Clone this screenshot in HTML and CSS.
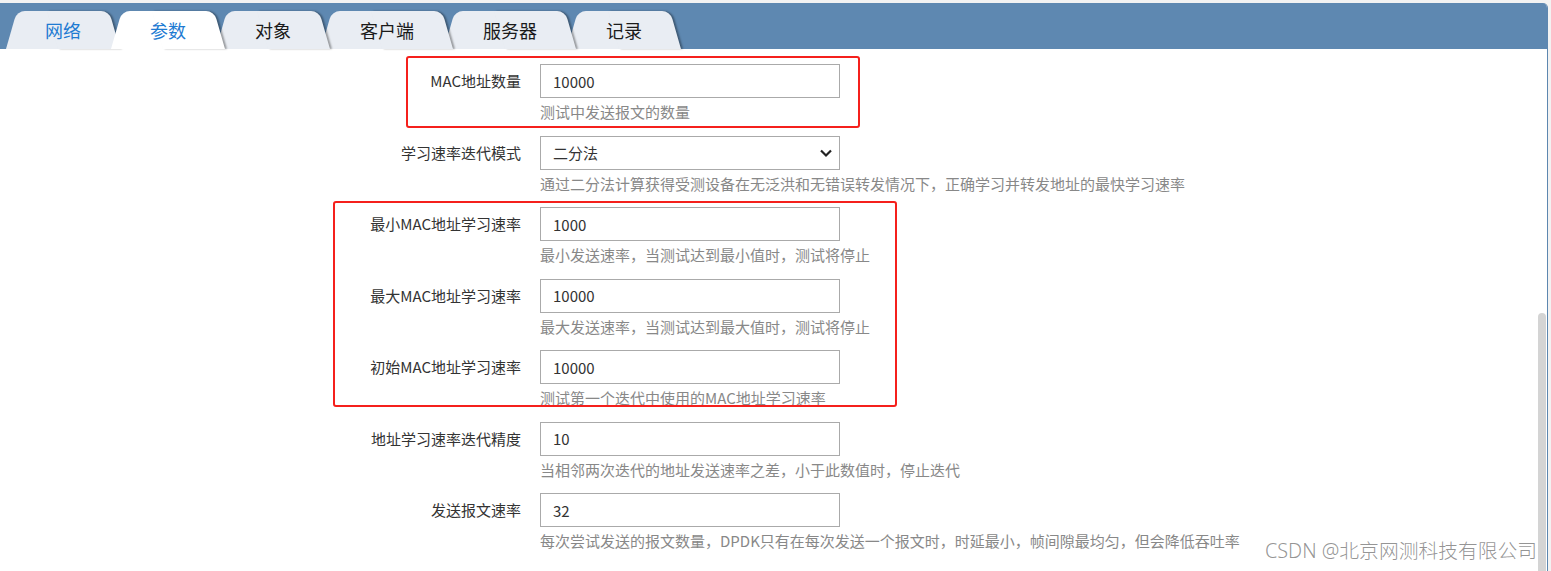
FILE: index.html
```html
<!DOCTYPE html>
<html lang="zh-CN">
<head>
  <meta charset="UTF-8">
  <title>测试参数</title>
  <link rel="stylesheet" href="styles.css">
</head>
<body>

<div class="panel">
  <div class="tabbar">
    <div class="tab visited">网络</div>
    <div class="tab active">参数</div>
    <div class="tab">对象</div>
    <div class="tab">客户端</div>
    <div class="tab">服务器</div>
    <div class="tab">记录</div>
  </div>

  <div class="content">
    <div class="row">
      <label class="label">MAC地址数量</label>
      <div class="field">
        <input class="input" type="text" value="10000">
        <div class="help">测试中发送报文的数量</div>
      </div>
    </div>

    <div class="row">
      <label class="label">学习速率迭代模式</label>
      <div class="field">
        <div class="select-wrap">
          <select class="input select">
            <option>二分法</option>
          </select>
          <svg class="chevron" width="14" height="10" viewBox="0 0 14 10">
            <path d="M2 2.5 L7 7.5 L12 2.5" fill="none" stroke="#222" stroke-width="2.2"/>
          </svg>
        </div>
        <div class="help">通过二分法计算获得受测设备在无泛洪和无错误转发情况下，正确学习并转发地址的最快学习速率</div>
      </div>
    </div>

    <div class="row">
      <label class="label">最小MAC地址学习速率</label>
      <div class="field">
        <input class="input" type="text" value="1000">
        <div class="help">最小发送速率，当测试达到最小值时，测试将停止</div>
      </div>
    </div>

    <div class="row">
      <label class="label">最大MAC地址学习速率</label>
      <div class="field">
        <input class="input" type="text" value="10000">
        <div class="help">最大发送速率，当测试达到最大值时，测试将停止</div>
      </div>
    </div>

    <div class="row">
      <label class="label">初始MAC地址学习速率</label>
      <div class="field">
        <input class="input" type="text" value="10000">
        <div class="help">测试第一个迭代中使用的MAC地址学习速率</div>
      </div>
    </div>

    <div class="row">
      <label class="label">地址学习速率迭代精度</label>
      <div class="field">
        <input class="input" type="text" value="10">
        <div class="help">当相邻两次迭代的地址发送速率之差，小于此数值时，停止迭代</div>
      </div>
    </div>

    <div class="row">
      <label class="label">发送报文速率</label>
      <div class="field">
        <input class="input" type="text" value="32">
        <div class="help">每次尝试发送的报文数量，DPDK只有在每次发送一个报文时，时延最小，帧间隙最均匀，但会降低吞吐率</div>
      </div>
    </div>
  </div>

  <div class="scroll-thumb"></div>
</div>

<div class="mark mark-1"></div>
<div class="mark mark-2"></div>
<div class="watermark">CSDN @北京网测科技有限公司</div>

</body>
</html>
```

FILE: styles.css
```css
body {
  margin: 0;
  background: #f2f2f2;
  font-family: "Noto Sans CJK SC", "Noto Sans", sans-serif;
  color: #333;
  height: 571px;
  overflow: hidden;
}

.panel {
  position: relative;
  margin-top: 3px;
  width: 1547px;
  height: 568px;
  background: #fff;
  border-right: 1px solid #5d87b0;
  border-top-right-radius: 5px;
  overflow: hidden;
}

.tabbar {
  display: flex;
  align-items: flex-end;
  height: 46px;
  padding-left: 6px;
  background: #5e88b1;
}

.tab {
  position: relative;
  box-sizing: border-box;
  height: 38px;
  padding: 0 39px;
  margin-right: -9px;
  line-height: 38px;
  text-align: center;
  font-size: 18px;
  color: #1a1a1a;
}

.tab::before,
.tab::after {
  content: '';
  position: absolute;
  top: 0;
  bottom: 0;
  width: 54%;
  background: #e9edf3;
  z-index: -1;
  transform-origin: bottom;
}

.tab::before {
  left: 0;
  border-top-left-radius: 8px;
  transform: skewX(-16deg);
}

.tab::after {
  right: 0;
  border-top-right-radius: 8px;
  transform: skewX(16deg);
  box-shadow: 2px 0 2px rgba(0, 0, 0, 0.35);
}

.tab:nth-child(1) { z-index: 6; }
.tab:nth-child(2) { z-index: 5; }
.tab:nth-child(3) { z-index: 4; }
.tab:nth-child(4) { z-index: 3; }
.tab:nth-child(5) { z-index: 2; }
.tab:nth-child(6) { z-index: 1; }

.tab.visited {
  color: #1e7bd2;
}

.tab.active {
  z-index: 10;
  color: #1e7bd2;
}

.tab.active::before,
.tab.active::after {
  background: #fff;
}

.content {
  padding-top: 15px;
}

.row {
  display: flex;
  align-items: flex-start;
  margin-bottom: 13.5px;
}

.label {
  width: 521px;
  flex-shrink: 0;
  text-align: right;
  font-size: 15px;
  line-height: 34px;
  color: #333;
}

.field {
  margin-left: 19px;
}

.input {
  display: block;
  box-sizing: border-box;
  width: 300px;
  height: 34px;
  padding: 0 12px;
  border: 1px solid #aaa;
  border-radius: 0;
  background: #fff;
  font-family: "Noto Sans CJK SC", "Noto Sans", sans-serif;
  font-size: 15px;
  color: #333;
  outline: none;
}

.select-wrap {
  position: relative;
  width: 300px;
}

.select {
  appearance: none;
  -webkit-appearance: none;
}

.chevron {
  position: absolute;
  right: 7px;
  top: 12px;
  pointer-events: none;
}

.help {
  margin-top: 4px;
  font-size: 15px;
  line-height: 20px;
  color: #888;
  white-space: nowrap;
}

.scroll-thumb {
  position: absolute;
  left: 1538px;
  top: 310px;
  width: 8px;
  height: 300px;
  border-radius: 4px;
  background: #d4d4d4;
}

.mark {
  position: absolute;
  border: 2.5px solid #f5201c;
  border-radius: 3px;
  box-sizing: border-box;
}

.mark-1 {
  left: 406px;
  top: 56px;
  width: 454px;
  height: 72px;
}

.mark-2 {
  left: 333px;
  top: 201px;
  width: 564px;
  height: 206px;
}

.watermark {
  position: absolute;
  left: 1265px;
  top: 537px;
  font-family: "Noto Sans", "Noto Sans CJK SC", sans-serif;
  font-size: 19.8px;
  font-weight: 300;
  line-height: 28px;
  color: rgba(130, 130, 130, 0.85);
  white-space: nowrap;
}
```
